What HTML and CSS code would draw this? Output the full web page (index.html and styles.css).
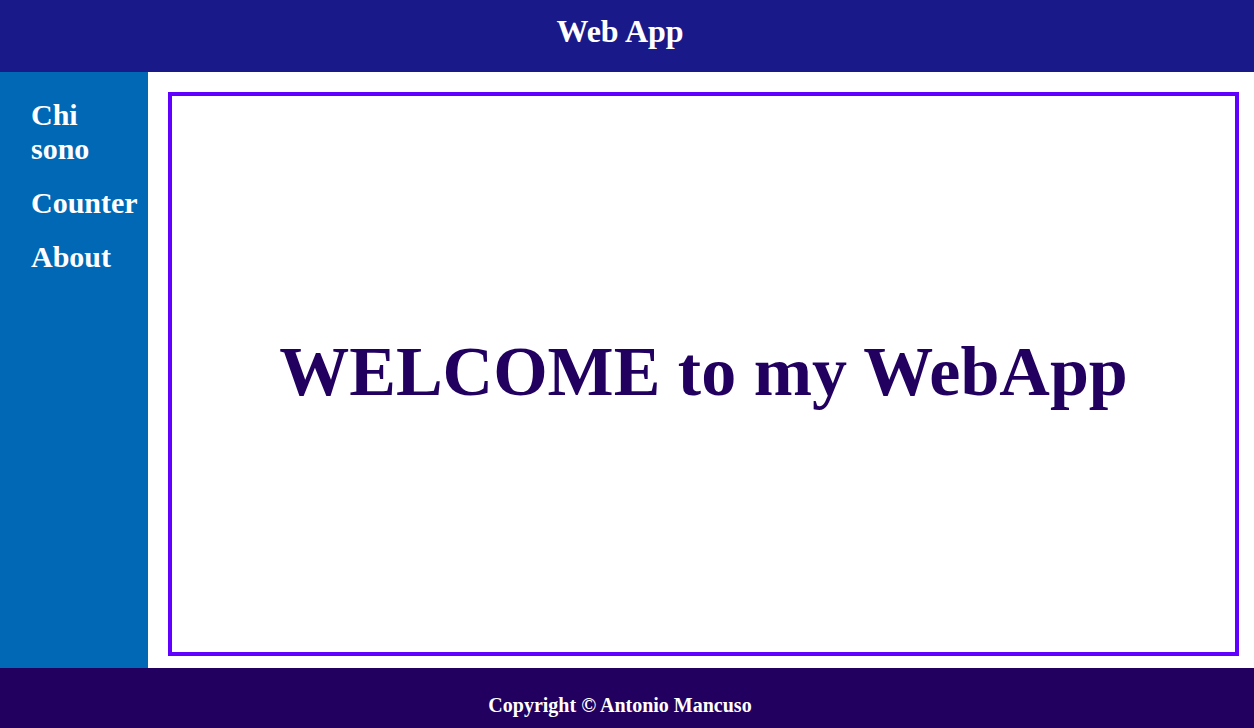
FILE: index.html
```html
<!DOCTYPE html>
<html lang="it">
<head>
<meta charset="utf-8">
<title>Web App</title>
<link rel="stylesheet" href="styles.css">
</head>
<body>
<div class="page">
  <header class="topbar">
    <h1 class="brand">Web App</h1>
  </header>
  <div class="middle">
    <nav class="sidebar">
      <a class="nav-link" href="#">Chi sono</a>
      <a class="nav-link" href="#">Counter</a>
      <a class="nav-link" href="#">About</a>
    </nav>
    <main class="content">
      <section class="welcome-box">
        <h2 class="welcome">WELCOME to my WebApp</h2>
      </section>
    </main>
  </div>
  <footer class="footer">
    <p class="copyright">Copyright © Antonio Mancuso</p>
  </footer>
</div>
</body>
</html>
```
FILE: styles.css
```css
html, body {
  margin: 0;
  padding: 0;
  height: 100%;
}
body {
  font-family: "Liberation Serif", "Times New Roman", serif;
  font-weight: bold;
  overflow: hidden;
}
.page {
  display: flex;
  flex-direction: column;
  height: 728px;
}
.topbar {
  height: 72px;
  flex: 0 0 72px;
  box-sizing: border-box;
  background: #1a198a;
  padding: 13px 14px 0 0;
  text-align: center;
}
.brand {
  margin: 0;
  font-size: 32px;
  line-height: normal;
  color: #ffffff;
}
.middle {
  flex: 1 1 auto;
  display: flex;
  min-height: 0;
}
.sidebar {
  width: 148px;
  flex: 0 0 148px;
  box-sizing: border-box;
  background: #0068b5;
  padding: 26px 8px 0 31px;
  display: flex;
  flex-direction: column;
  gap: 20px;
}
.nav-link {
  color: #ffffff;
  text-decoration: none;
  font-size: 30px;
  line-height: normal;
}
.content {
  flex: 1 1 auto;
  background: #ffffff;
  padding: 20px 15px 12px 20px;
  display: flex;
  min-width: 0;
}
.welcome-box {
  flex: 1 1 auto;
  border: 4px solid #6100ff;
  display: flex;
  align-items: center;
  justify-content: center;
}
.welcome {
  margin: 0 0 4px 0;
  font-size: 70px;
  line-height: normal;
  color: #220060;
}
.footer {
  height: 60px;
  flex: 0 0 60px;
  box-sizing: border-box;
  background: #220060;
  padding: 26px 14px 0 0;
  text-align: center;
}
.copyright {
  margin: 0;
  font-size: 20px;
  line-height: normal;
  color: #ffffff;
}
```
